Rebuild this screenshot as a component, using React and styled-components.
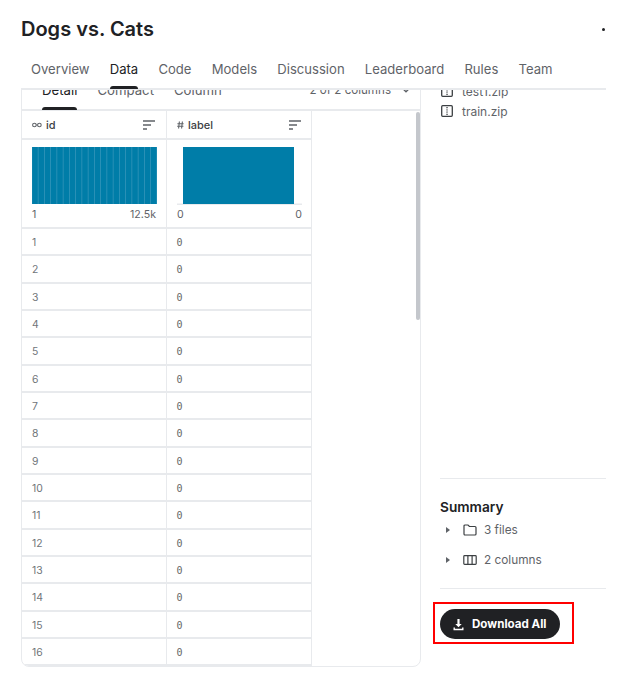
import React from 'react';
import styled, { createGlobalStyle } from 'styled-components';

const GlobalStyle = createGlobalStyle`
  html, body {
    margin: 0;
    padding: 0;
    background: #fff;
    font-family: 'Inter', sans-serif;
    color: #202124;
  }
  * { box-sizing: border-box; }
`;

const Page = styled.div`
  width: 626px;
  height: 687px;
  overflow: hidden;
  padding: 0 20px 0 21px;
  display: flex;
  flex-direction: column;
`;

const TitleRow = styled.div`
  height: 58px;
  display: flex;
  align-items: center;
  justify-content: space-between;
`;

const Title = styled.h1`
  margin: 0;
  font-size: 20px;
  line-height: 24px;
  font-weight: 600;
  color: #202124;
`;

const MenuDot = styled.span`
  width: 3px;
  height: 3px;
  margin-right: 1px;
  border-radius: 50%;
  background: #202124;
`;

const Tabs = styled.nav`
  height: 32px;
  flex: none;
  display: flex;
  gap: 20.2px;
  padding-left: 10px;
  border-bottom: 2px solid #e8eaed;
`;

const Tab = styled.div`
  position: relative;
  height: 30px;
  padding-top: 3px;
  font-size: 13.1px;
  line-height: 17px;
  color: ${(p) => (p.$active ? '#202124' : '#5f6368')};

  ${(p) =>
    p.$active &&
    `&::after {
      content: '';
      position: absolute;
      left: 0;
      right: 0;
      bottom: -1px;
      height: 3px;
      border-radius: 3px 3px 0 0;
      background: #202124;
    }`}
`;

const Body = styled.div`
  flex: 1;
  min-height: 0;
  overflow: hidden;
  display: flex;
`;

const Card = styled.section`
  width: 400px;
  height: 597px;
  flex: none;
  margin-top: -20px;
  border: 1px solid #e8eaed;
  border-radius: 8px;
  display: flex;
  flex-direction: column;
  overflow: hidden;
`;

const SubTabs = styled.div`
  height: 40px;
  flex: none;
  display: flex;
  align-items: flex-start;
  gap: 20px;
  padding-left: 20px;
  border-bottom: 2px solid #e8eaed;
`;

const SubTab = styled.div`
  position: relative;
  height: 38px;
  padding-top: 11px;
  font-size: 13.2px;
  line-height: 17px;
  color: ${(p) => (p.$active ? '#202124' : '#5f6368')};

  ${(p) =>
    p.$active &&
    `&::after {
      content: '';
      position: absolute;
      left: 0;
      right: 0;
      bottom: -1px;
      height: 3px;
      border-radius: 3px 3px 0 0;
      background: #202124;
    }`}
`;

const ColumnPicker = styled.div`
  margin-left: auto;
  margin-right: 10px;
  padding-top: 12px;
  display: flex;
  align-items: center;
  gap: 11px;
  font-size: 11.6px;
  line-height: 15px;
  color: #5f6368;
`;

const TableWrap = styled.div`
  flex: 1;
  min-height: 0;
  position: relative;
  overflow: hidden;
`;

const Table = styled.div`
  width: 290px;
  display: grid;
  grid-template-columns: 145px 145px;
  border-right: 1px solid #e8eaed;
`;

const HeadCell = styled.div`
  height: 29px;
  padding: 0 10px;
  display: flex;
  align-items: center;
  gap: 4px;
  font-size: 11px;
  font-weight: 500;
  color: #3c4043;
  border-bottom: 2px solid #e8eaed;
  border-right: ${(p) => (p.$last ? 'none' : '1px solid #e8eaed')};

  svg:last-child {
    margin-left: auto;
  }
`;

const ChartCell = styled.div`
  height: 89px;
  padding: 7px 10px 0;
  border-bottom: 2px solid #e8eaed;
  border-right: ${(p) => (p.$last ? 'none' : '1px solid #e8eaed')};
`;

const ChartSvg = styled.svg`
  display: block;
  width: 125px;
  height: 58px;
`;

const RangeRow = styled.div`
  margin-top: 3px;
  display: flex;
  justify-content: space-between;
  font-size: 10.6px;
  line-height: 14px;
  color: #5f6368;
`;

const Cell = styled.div`
  height: 27.33px;
  padding: 2px 10px 0 ${(p) => (p.$mono ? '9.5px' : '10px')};
  display: flex;
  align-items: center;
  font-size: ${(p) => (p.$mono ? '10px' : '10.4px')};
  color: ${(p) => (p.$mono ? '#666666' : '#70757a')};
  font-family: ${(p) => (p.$mono ? "'DejaVu Sans Mono', monospace" : "'Inter', sans-serif")};
  border-bottom: 2px solid #e8eaed;
  border-right: ${(p) => (p.$last ? 'none' : '1px solid #e8eaed')};
`;

const ScrollThumb = styled.div`
  position: absolute;
  top: 1px;
  right: 0;
  width: 4px;
  height: 208px;
  border-radius: 2px;
  background: #c4c7cc;
`;

const Side = styled.aside`
  flex: 1;
  min-width: 0;
  padding-left: 19px;
  display: flex;
  flex-direction: column;
`;

const FileList = styled.div`
  margin-top: -8px;
  height: 397px;
  flex: none;
  display: flex;
  flex-direction: column;
  gap: 2px;
  border-bottom: 1px solid #e8eaed;
`;

const FileRow = styled.div`
  height: 18px;
  display: flex;
  align-items: center;
  gap: 9px;
  padding-left: 1px;
  font-size: 12px;
  color: #5f6368;
`;

const SummaryTitle = styled.h2`
  margin: 20px 0 0;
  font-size: 13.7px;
  line-height: 17px;
  font-weight: 600;
  color: #202124;
`;

const SummaryList = styled.div`
  margin-top: 5px;
  padding-bottom: 19px;
  display: flex;
  flex-direction: column;
  gap: 12px;
  border-bottom: 1px solid #e8eaed;
`;

const SummaryRow = styled.div`
  height: 18px;
  display: flex;
  align-items: center;
  padding-left: 6px;
  font-size: 11.8px;
  color: #5f6368;

  svg:first-child {
    margin-right: 13px;
  }
  svg:nth-child(2) {
    margin-right: 7px;
  }
`;

const Highlight = styled.div`
  width: 141px;
  height: 42px;
  margin: 13px 0 0 -7px;
  padding: 5px 0 0 5px;
  border: 2px solid #f00;
`;

const DownloadButton = styled.button`
  width: 120px;
  height: 30px;
  padding: 0 0 0 12px;
  border: none;
  border-radius: 15px;
  background: #202124;
  color: #fff;
  display: flex;
  align-items: center;
  gap: 7px;
  font-family: 'Inter', sans-serif;
  font-size: 11.6px;
  font-weight: 700;
`;

const SortIcon = () => (
  <svg width="14" height="10" viewBox="0 0 14 10">
    <path d="M1 1h12M1 5h8M1 9h4" stroke="#5f6368" strokeWidth="1.4" fill="none" />
  </svg>
);

const KeyIcon = () => (
  <svg width="10" height="6" viewBox="0 0 10 6" fill="none" stroke="#5f6368" strokeWidth="1.1">
    <circle cx="2.4" cy="3" r="1.8" />
    <circle cx="7.4" cy="3" r="1.8" />
    <path d="M4.2 3h1.4" />
  </svg>
);

const HashIcon = () => (
  <svg width="7" height="8" viewBox="0 0 7 8" fill="none" stroke="#5f6368" strokeWidth="1.1">
    <path d="M2.4.5 1.6 7.5M5.4.5l-.8 7M.4 2.7h6.2M.2 5.3h6.2" />
  </svg>
);

const ChevronIcon = () => (
  <svg width="8" height="5" viewBox="0 0 8 5" fill="none" stroke="#5f6368" strokeWidth="1.4">
    <path d="M1 .8l3 3 3-3" />
  </svg>
);

const ZipIcon = () => (
  <svg width="12" height="12" viewBox="0 0 12 12" fill="none">
    <rect x=".7" y=".7" width="10.6" height="10.6" rx="1" stroke="#3c4043" strokeWidth="1.3" />
    <path d="M5.4 2.5h1.3M6.6 4.2H5.4M5.4 6h1.3M6.6 7.8H5.4M5.4 9.5h1.3" stroke="#3c4043" />
  </svg>
);

const Caret = () => (
  <svg width="4" height="6" viewBox="0 0 4 6">
    <path d="M0 0l4 3-4 3z" fill="#5f6368" />
  </svg>
);

const FolderIcon = () => (
  <svg width="14" height="12" viewBox="0 0 14 12" fill="none" stroke="#3c4043" strokeWidth="1.2">
    <path d="M1 2a1 1 0 0 1 1-1h3l1.4 1.5H12a1 1 0 0 1 1 1V10a1 1 0 0 1-1 1H2a1 1 0 0 1-1-1z" />
  </svg>
);

const ColumnsIcon = () => (
  <svg width="14" height="12" viewBox="0 0 14 12" fill="none" stroke="#3c4043" strokeWidth="1.2">
    <rect x=".8" y="1.6" width="12.4" height="8.8" rx=".8" />
    <path d="M4.9 1.6v8.8M9.1 1.6v8.8" />
  </svg>
);

const DownloadIcon = () => (
  <svg width="13" height="13" viewBox="0 0 13 13" fill="#fff">
    <path d="M5.4 1h2.2v5h2.1L6.5 9.2 3.3 6h2.1z" />
    <path d="M1.5 9.5h1.4v1.3h7.2V9.5h1.4v2.7h-10z" />
  </svg>
);

const IdChart = () => (
  <ChartSvg viewBox="0 0 125 58">
    <rect x="0" y="0" width="125" height="57" fill="#3f9bbd" />
    {Array.from({ length: 20 }, (_, i) => (
      <rect key={i} x={i * 6.25 + 0.2} y="0" width="5.6" height="57" fill="#007da8" />
    ))}
  </ChartSvg>
);

const LabelChart = () => (
  <ChartSvg viewBox="0 0 125 58">
    <rect x="0" y="56.5" width="125" height="1.5" fill="#e8eaed" />
    <rect x="6" y="0" width="111" height="57" fill="#007da8" />
  </ChartSvg>
);

const rows = Array.from({ length: 16 }, (_, i) => i + 1);

const App = () => {
  return (
    <Page>
      <GlobalStyle />
      <TitleRow>
        <Title>Dogs vs. Cats</Title>
        <MenuDot />
      </TitleRow>
      <Tabs>
        <Tab>Overview</Tab>
        <Tab $active>Data</Tab>
        <Tab>Code</Tab>
        <Tab>Models</Tab>
        <Tab>Discussion</Tab>
        <Tab>Leaderboard</Tab>
        <Tab>Rules</Tab>
        <Tab>Team</Tab>
      </Tabs>
      <Body>
        <Card>
          <SubTabs>
            <SubTab $active>Detail</SubTab>
            <SubTab>Compact</SubTab>
            <SubTab>Column</SubTab>
            <ColumnPicker>
              2 of 2 columns
              <ChevronIcon />
            </ColumnPicker>
          </SubTabs>
          <TableWrap>
            <Table>
              <HeadCell>
                <KeyIcon />
                id
                <SortIcon />
              </HeadCell>
              <HeadCell $last>
                <HashIcon />
                label
                <SortIcon />
              </HeadCell>
              <ChartCell>
                <IdChart />
                <RangeRow>
                  <span>1</span>
                  <span>12.5k</span>
                </RangeRow>
              </ChartCell>
              <ChartCell $last>
                <LabelChart />
                <RangeRow>
                  <span>0</span>
                  <span>0</span>
                </RangeRow>
              </ChartCell>
              {rows.map((n) => (
                <React.Fragment key={n}>
                  <Cell>{n}</Cell>
                  <Cell $mono $last>0</Cell>
                </React.Fragment>
              ))}
            </Table>
            <ScrollThumb />
          </TableWrap>
        </Card>
        <Side>
          <FileList>
            <FileRow>
              <ZipIcon />
              test1.zip
            </FileRow>
            <FileRow>
              <ZipIcon />
              train.zip
            </FileRow>
          </FileList>
          <SummaryTitle>Summary</SummaryTitle>
          <SummaryList>
            <SummaryRow>
              <Caret />
              <FolderIcon />
              3 files
            </SummaryRow>
            <SummaryRow>
              <Caret />
              <ColumnsIcon />
              2 columns
            </SummaryRow>
          </SummaryList>
          <Highlight>
            <DownloadButton>
              <DownloadIcon />
              Download All
            </DownloadButton>
          </Highlight>
        </Side>
      </Body>
    </Page>
  );
};

export default App;
